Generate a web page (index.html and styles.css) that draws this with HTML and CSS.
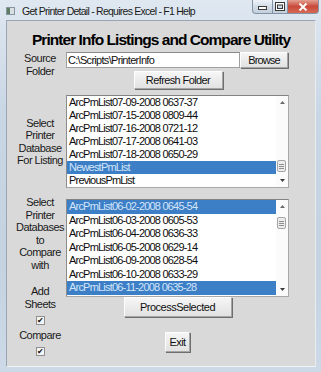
FILE: index.html
```html
<!DOCTYPE html>
<html lang="en">
<head>
  <meta charset="UTF-8">
  <title>Get Printer Detail - Requires Excel - F1 Help</title>
  <link rel="stylesheet" href="styles.css">
</head>
<body>
  <div class="window">
    <div class="titlebar">
      <span class="app-icon"></span>
      <span class="title">Get Printer Detail - Requires Excel - F1 Help</span>
      <div class="caption">
        <span class="cap-btn min"><svg width="9" height="6" viewBox="0 0 9 6"><rect x="0.5" y="2.5" width="8" height="3" fill="#fff" stroke="#3a3a3a" stroke-width="1"/></svg></span>
        <span class="cap-btn max"><svg width="10" height="9" viewBox="0 0 10 9"><rect x="0.5" y="0.5" width="9" height="8" fill="#fff" stroke="#3a3a3a" stroke-width="1"/><rect x="2.5" y="3" width="5" height="3.5" fill="#cfd9e4" stroke="#3a3a3a" stroke-width="1"/></svg></span>
        <span class="cap-btn close"><svg width="10" height="8" viewBox="0 0 10 8"><path d="M1.5 0.5 L8.5 7.5 M8.5 0.5 L1.5 7.5" stroke="#fff" stroke-width="2"/></svg></span>
      </div>
    </div>

    <div class="client">
      <h1>Printer Info Listings and Compare Utility</h1>

      <div class="row row-source">
        <div class="label">Source<br>Folder</div>
        <div class="field">
          <div class="inline">
            <input class="textbox" type="text" value="C:\Scripts\PrinterInfo">
            <button class="btn browse">Browse</button>
          </div>
          <button class="btn refresh">Refresh Folder</button>
        </div>
      </div>

      <div class="row row-list1">
        <div class="label">Select<br>Printer<br>Database<br>For Listing</div>
        <div class="listbox list1">
          <ul>
            <li>ArcPmList07-09-2008 0637-37</li>
            <li>ArcPmList07-15-2008 0809-44</li>
            <li>ArcPmList07-16-2008 0721-12</li>
            <li>ArcPmList07-17-2008 0641-03</li>
            <li>ArcPmList07-18-2008 0650-29</li>
            <li class="sel">NewestPmList</li>
            <li>PreviousPmList</li>
          </ul>
          <div class="scroll">
            <svg class="arrow" width="5" height="3" viewBox="0 0 5 3"><path d="M0 3 L2.5 0 L5 3 Z" fill="#6a6a6a"/></svg>
            <span class="thumb thumb-low"></span>
            <svg class="arrow down" width="5" height="3" viewBox="0 0 5 3"><path d="M0 0 L2.5 3 L5 0 Z" fill="#3a3a3a"/></svg>
          </div>
        </div>
      </div>

      <div class="row row-compare">
        <div class="side">
          <div class="label">Select<br>Printer<br>Databases<br>to<br>Compare<br>with</div>
          <div class="label options">
            <span>Add<br>Sheets</span>
            <span class="check">&#10004;</span>
            <span class="opt-compare">Compare</span>
            <span class="check">&#10004;</span>
          </div>
        </div>
        <div class="main">
          <div class="listbox list2">
            <ul>
              <li class="sel">ArcPmList06-02-2008 0645-54</li>
              <li>ArcPmList06-03-2008 0605-53</li>
              <li>ArcPmList06-04-2008 0636-33</li>
              <li>ArcPmList06-05-2008 0629-14</li>
              <li>ArcPmList06-09-2008 0628-54</li>
              <li>ArcPmList06-10-2008 0633-29</li>
              <li class="sel">ArcPmList06-11-2008 0635-28</li>
            </ul>
            <div class="scroll">
              <svg class="arrow" width="5" height="3" viewBox="0 0 5 3"><path d="M0 3 L2.5 0 L5 3 Z" fill="#6a6a6a"/></svg>
              <span class="thumb thumb-high"></span>
              <svg class="arrow down" width="5" height="3" viewBox="0 0 5 3"><path d="M0 0 L2.5 3 L5 0 Z" fill="#3a3a3a"/></svg>
            </div>
          </div>
          <button class="btn process">ProcessSelected</button>
          <button class="btn exit">Exit</button>
        </div>
      </div>
    </div>
  </div>
</body>
</html>
```

FILE: styles.css
```css
* {
  box-sizing: border-box;
}

body {
  margin: 0;
  width: 321px;
  height: 372px;
  overflow: hidden;
  font-family: "Liberation Sans", Arial, sans-serif;
  color: #111;
}

.window {
  width: 321px;
  height: 372px;
  background: linear-gradient(to bottom, #dfe8f1, #c9d6e4 30%, #c4d2e1 70%, #cdd9e6);
  padding: 0 5px 5px 6px;
  display: flex;
  flex-direction: column;
}

/* title bar */

.titlebar {
  height: 20px;
  display: flex;
  align-items: center;
  position: relative;
  padding-top: 1px;
}

.app-icon {
  width: 9px;
  height: 8px;
  margin: 0 7px 0 0;
  background: linear-gradient(to right, #5f7d62 40%, #d9e0e4 40%);
  border: 1px solid #8795a0;
}

.title {
  font-size: 10.5px;
  letter-spacing: -0.75px;
  color: #1b1b1b;
}

.caption {
  position: absolute;
  top: 0;
  right: -3px;
  display: flex;
  height: 14px;
}

.cap-btn {
  display: flex;
  align-items: center;
  justify-content: center;
  width: 20px;
  border: 1px solid #8493a6;
  border-top: none;
  background: linear-gradient(to bottom, #eef3f8, #d3dde8 50%, #c3cfdc);
}

.cap-btn.min {
  border-radius: 0 0 0 4px;
  border-right: none;
}

.cap-btn.max {
  width: 16px;
}

.cap-btn.close {
  width: 31px;
  border-radius: 0 0 4px 0;
  border-left: none;
  background: linear-gradient(to bottom, #e3a191, #c9493a 50%, #d66a55);
}

/* client area */

.client {
  flex: 1;
  background: #d9d9d9;
  border: 1px solid #9aa6b4;
  border-bottom-color: #f2f5f8;
  border-right-color: #e8edf2;
}

h1 {
  margin: 9px 0 3px;
  text-align: center;
  font-size: 15.5px;
  line-height: 19px;
  font-weight: bold;
  letter-spacing: -0.95px;
  color: #000;
}

.row {
  display: grid;
  grid-template-columns: 59px 223px;
}

.label {
  display: flex;
  flex-direction: column;
  align-items: center;
  padding-left: 7px;
  text-align: center;
  font-size: 11px;
  line-height: 12.5px;
  letter-spacing: -0.5px;
  color: #1a1a1a;
}

.field {
  display: flex;
  flex-direction: column;
  align-items: center;
}

.inline {
  display: flex;
  width: 100%;
}

.textbox {
  width: 174px;
  height: 16px;
  margin: 0;
  padding: 0 1px;
  border: 1px solid #a0a0a0;
  border-top-color: #8a8a8a;
  background: #fff;
  font-family: inherit;
  font-size: 11px;
  letter-spacing: -0.7px;
  color: #111;
  outline: none;
}

.btn {
  font-family: inherit;
  font-size: 11px;
  letter-spacing: -0.6px;
  color: #111;
  background: linear-gradient(to bottom, #f6f6f6, #ebebeb 50%, #e2e2e2);
  border: 1px solid #a5a5a5;
  border-top-color: #fdfdfd;
  border-left-color: #fdfdfd;
  box-shadow: 1px 1px 0 #6e6e6e;
  padding: 0;
  margin: 0;
}

.browse {
  width: 48px;
  height: 16px;
  line-height: 14px;
  letter-spacing: -0.9px;
}

.refresh {
  width: 89px;
  height: 18px;
  margin-top: 3px;
  margin-left: 1px;
}

/* list boxes */

.row-list1 {
  margin-top: 6px;
  align-items: center;
}

.listbox {
  display: flex;
  width: 223px;
  background: #fff;
  border: 1px solid #a8a8a8;
  border-top-color: #828282;
  border-left-color: #8c8c8c;
  overflow: hidden;
}

.list1 {
  height: 93px;
}

.list2 {
  height: 98px;
}

.listbox ul {
  list-style: none;
  margin: 0;
  padding: 0;
  flex: 1;
}

.listbox li {
  height: 13px;
  line-height: 13px;
  font-size: 11px;
  letter-spacing: -0.8px;
  padding-left: 2px;
  white-space: nowrap;
  color: #0d0d0d;
}

.list2 li {
  height: 13.5px;
  line-height: 13.5px;
}

.listbox li.sel {
  background: #3d7fc7;
  color: #d3e5f8;
}

.scroll {
  width: 12px;
  display: flex;
  flex-direction: column;
  align-items: center;
  background: #fbfbfb;
  position: relative;
  padding: 5px 0 5px;
}

.scroll .down {
  margin-top: auto;
}

.thumb {
  position: absolute;
  left: 1px;
  width: 9px;
  height: 12px;
  border: 1px solid #a4a4a4;
  border-radius: 2px;
  background-color: #ececec;
  background-image: repeating-linear-gradient(to bottom, #8f8f8f 0 1px, transparent 1px 2px);
  background-size: 5px 5px;
  background-position: center;
  background-repeat: no-repeat;
}

.thumb-low {
  top: 64px;
}

.thumb-high {
  top: 17px;
}

/* compare section */

.row-compare {
  margin-top: 11px;
}

.side .label:first-child {
  margin-top: -3px;
}

.options {
  margin-top: 14px;
  line-height: 13px;
}

.check {
  width: 9px;
  height: 9px;
  margin-top: 5px;
  border: 1px solid #8e8e8e;
  background: #f4f4f4;
  font-size: 8px;
  line-height: 7px;
  letter-spacing: 0;
  text-align: center;
  color: #111;
}

.opt-compare {
  margin-top: 4px;
}

.main {
  display: flex;
  flex-direction: column;
  align-items: center;
}

.process {
  width: 108px;
  height: 20px;
  letter-spacing: -0.5px;
}

.exit {
  width: 25px;
  height: 20px;
  margin-top: 15px;
}
```
